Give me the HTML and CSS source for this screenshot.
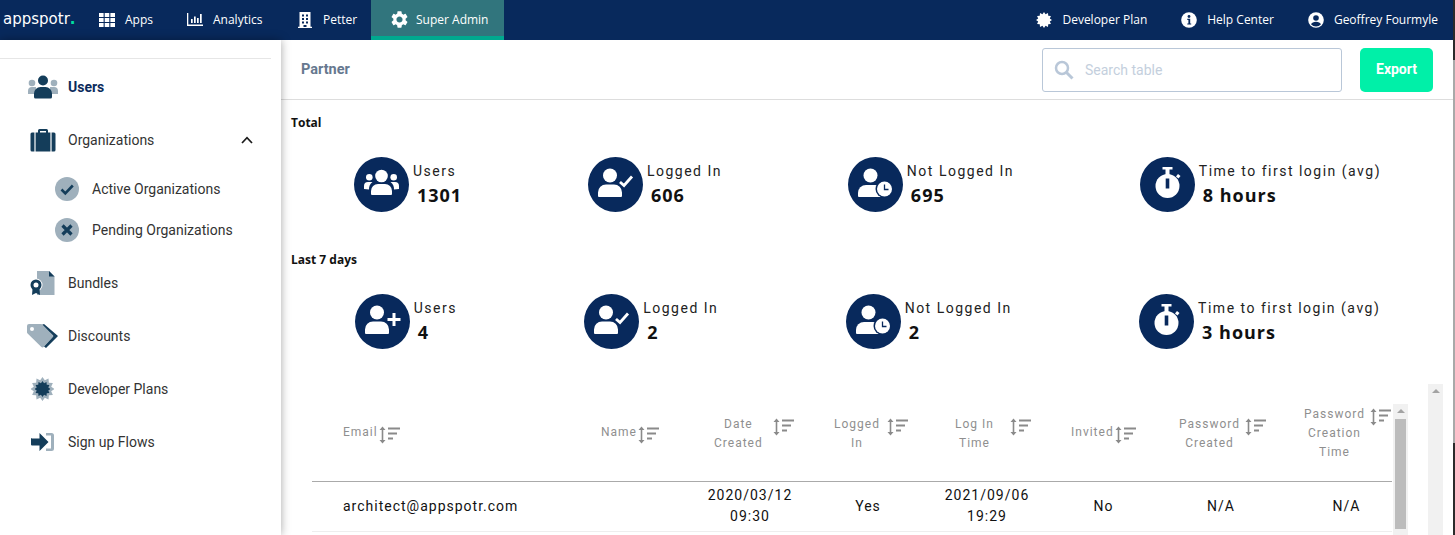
FILE: index.html
```html
<!DOCTYPE html>
<html lang="en">
<head>
    <meta charset="UTF-8">
    <meta name="viewport" content="width=device-width, initial-scale=1.0">
    <title>Super Admin - Partner</title>
    <link rel="stylesheet" href="styles.css">
</head>
<body>
    <svg class="icon-defs" width="0" height="0">
        <symbol id="person-check" viewBox="0 0 55 55">
            <circle cx="27.5" cy="27.5" r="27.5" fill="#08295c"/>
            <circle cx="22" cy="18.5" r="7" fill="#fff"/>
            <path d="M10 39v-3.500a8 8 0 0 1 8-8h8a8 8 0 0 1 8 8v3.500a1 1 0 0 1-1 1H11a1 1 0 0 1-1-1z" fill="#fff"/>
            <path d="M32 25l4 3.500 8-9" fill="none" stroke="#fff" stroke-width="2.800"/>
        </symbol>
        <symbol id="person-plus" viewBox="0 0 55 55">
            <circle cx="27.500" cy="27.500" r="27.500" fill="#08295c"/>
            <circle cx="22" cy="18.500" r="7" fill="#fff"/>
            <path d="M10 39v-3.500a8 8 0 0 1 8-8h8a8 8 0 0 1 8 8v3.500a1 1 0 0 1-1 1H11a1 1 0 0 1-1-1z" fill="#fff"/>
            <path d="M39 19v13M32.500 25.500h13" stroke="#fff" stroke-width="3"/>
        </symbol>
        <symbol id="person-clock" viewBox="0 0 55 55">
            <circle cx="27.500" cy="27.500" r="27.500" fill="#08295c"/>
            <circle cx="22.500" cy="18.500" r="7" fill="#fff"/>
            <path d="M10 39v-3a8 8 0 0 1 8-8h9a8 8 0 0 1 8 8v3a1 1 0 0 1-1 1H11a1 1 0 0 1-1-1z" fill="#fff"/>
            <circle cx="36.500" cy="32" r="9" fill="#08295c"/>
            <circle cx="36.500" cy="32" r="7.500" fill="#fff"/>
            <path d="M36.500 27.500v5h4" fill="none" stroke="#08295c" stroke-width="1.300"/>
        </symbol>
        <symbol id="group" viewBox="0 0 55 55">
            <circle cx="27.500" cy="27.500" r="27.500" fill="#08295c"/>
            <circle cx="27.500" cy="19" r="6.300" fill="#fff"/>
            <circle cx="15.300" cy="20.300" r="3.300" fill="#fff"/>
            <circle cx="39.700" cy="20.300" r="3.300" fill="#fff"/>
            <path d="M17 37v-3a7 7 0 0 1 7-7h7a7 7 0 0 1 7 7v3a1 1 0 0 1-1 1H18a1 1 0 0 1-1-1z" fill="#fff"/>
            <path d="M10 32v-3a4 4 0 0 1 4-4h4.500a9 9 0 0 0-3.500 7.500z" fill="#fff"/>
            <path d="M45 32v-3a4 4 0 0 0-4-4h-4.500a9 9 0 0 1 3.500 7.500z" fill="#fff"/>
        </symbol>
        <symbol id="stopwatch" viewBox="0 0 55 55">
            <circle cx="27.500" cy="27.500" r="27.500" fill="#08295c"/>
            <circle cx="27.500" cy="29" r="12" fill="#fff"/>
            <path d="M22.500 10h10v2.500h-3v6h-4v-6h-3z" fill="#fff"/>
            <path d="M36 19.500l2-2.500 2.500 2-2 2.500z" fill="#fff"/>
            <rect x="25.700" y="21.500" width="3.600" height="10" fill="#08295c"/>
        </symbol>
        <symbol id="sort" viewBox="0 0 21 18">
            <path d="M3.500 2.500v13" stroke="#8a8a8a" stroke-width="1.600"/>
            <path d="M0.500 4L3.500 0.500 6.500 4zM0.500 14L3.500 17.500 6.500 14z" fill="#8a8a8a"/>
            <path d="M9 2.500h12M9 7.500h9M9 12.500h5" stroke="#8a8a8a" stroke-width="1.800"/>
        </symbol>
        <symbol id="burst" viewBox="3.500 0 24 24">
            <polygon points="27.500,12 24.190,14.330 25.890,18 21.860,18.360 21.500,22.390 17.830,20.690 15.500,24 13.170,20.690 9.500,22.390 9.140,18.360 5.110,18 6.810,14.330 3.500,12 6.810,9.670 5.110,6 9.140,5.640 9.500,1.610 13.170,3.310 15.500,0 17.830,3.310 21.500,1.610 21.860,5.640 25.890,6 24.190,9.670"/>
        </symbol>
    </svg>

    <div class="page">
        <header class="topbar">
            <div class="logo">appspotr<span class="logo-dot">.</span></div>
            <nav class="topbar-left">
                <a class="top-link link-apps">
                    <svg class="top-icon" viewBox="0 0 16 14" width="16" height="14" fill="#fff">
                        <rect x="0" y="0" width="4.600" height="4"/><rect x="5.700" y="0" width="4.600" height="4"/><rect x="11.400" y="0" width="4.600" height="4"/>
                        <rect x="0" y="5" width="4.600" height="4"/><rect x="5.700" y="5" width="4.600" height="4"/><rect x="11.400" y="5" width="4.600" height="4"/>
                        <rect x="0" y="10" width="4.600" height="4"/><rect x="5.700" y="10" width="4.600" height="4"/><rect x="11.400" y="10" width="4.600" height="4"/>
                    </svg>
                    Apps
                </a>
                <a class="top-link link-analytics">
                    <svg class="top-icon" viewBox="0 0 16 13" width="16" height="13" fill="#fff">
                        <path d="M0 0h1.300v11.500H16V13H0z"/>
                        <rect x="4" y="6" width="1.700" height="4"/><rect x="7" y="3.500" width="1.700" height="6.500"/><rect x="10" y="5" width="1.700" height="5"/><rect x="13" y="1" width="1.700" height="9"/>
                    </svg>
                    Analytics
                </a>
                <a class="top-link link-petter">
                    <svg class="top-icon" viewBox="0 0 14 16" width="14" height="16">
                        <path d="M1.500 0h11v14.800H14V16H0v-1.200h1.500z" fill="#fff"/>
                        <path d="M4 2.500h2v2H4zM8 2.500h2v2H8zM4 6h2v2H4zM8 6h2v2H8zM4 9.500h2v2H4zM8 9.500h2v2H8zM5.500 13h3v2h-3z" fill="#08295c"/>
                    </svg>
                    Petter
                </a>
                <a class="top-link link-admin active">
                    <svg class="top-icon" viewBox="2 2 20 20" width="17" height="17" fill="#fff">
                        <path d="M19.140 12.940c.04-.3.06-.61.06-.94 0-.32-.02-.64-.07-.94l2.030-1.580a.49.49 0 0 0 .12-.61l-1.920-3.320a.488.488 0 0 0-.59-.22l-2.390.96c-.5-.38-1.030-.7-1.620-.94l-.36-2.540a.484.484 0 0 0-.48-.41h-3.840c-.24 0-.43.17-.47.41l-.36 2.540c-.59.24-1.130.57-1.620.94l-2.390-.96c-.22-.08-.47 0-.59.22L2.740 8.870c-.12.21-.08.47.12.61l2.030 1.580c-.05.3-.09.63-.09.94s.02.64.07.94l-2.030 1.580a.49.49 0 0 0-.12.61l1.920 3.320c.12.22.37.29.59.22l2.390-.96c.5.38 1.030.7 1.620.94l.36 2.540c.05.24.24.41.48.41h3.840c.24 0 .44-.17.47-.41l.36-2.540c.59-.24 1.130-.56 1.620-.94l2.390.96c.22.08.47 0 .59-.22l1.920-3.320c.12-.22.07-.47-.12-.61l-2.010-1.580zM12 15.600c-1.980 0-3.600-1.620-3.600-3.600s1.620-3.600 3.600-3.600 3.600 1.620 3.600 3.600-1.620 3.600-3.600 3.600z"/>
                    </svg>
                    Super Admin
                </a>
            </nav>
            <nav class="topbar-right">
                <a class="top-link">
                    <svg class="top-icon badge-icon" width="16" height="16"><use href="#burst"/></svg>
                    Developer Plan
                </a>
                <a class="top-link">
                    <svg class="top-icon" viewBox="0 0 16 16" width="16" height="16">
                        <circle cx="8" cy="8" r="7.800" fill="#fff"/>
                        <circle cx="8" cy="4.500" r="1.400" fill="#08295c"/>
                        <path d="M6.300 6.800h2.900v4.700h1v1.100H6.300v-1.100h1.100V7.900H6.300z" fill="#08295c"/>
                    </svg>
                    Help Center
                </a>
                <a class="top-link">
                    <svg class="top-icon" viewBox="0 0 16 16" width="16" height="16">
                        <circle cx="8" cy="8" r="7.800" fill="#fff"/>
                        <circle cx="8" cy="6" r="2.800" fill="#08295c"/>
                        <path d="M3 12.300c.8-1.800 2.600-2.600 5-2.600s4.200.8 5 2.600a6.600 6.600 0 0 1-10 0z" fill="#08295c"/>
                    </svg>
                    Geoffrey Fourmyle
                </a>
            </nav>
        </header>

        <div class="layout">
            <aside class="sidebar">
                <div class="sidebar-top"></div>
                <ul class="side-menu">
                    <li class="side-item selected">
                        <svg class="side-icon" viewBox="0 0 32 24" width="32" height="24">
                            <circle cx="5" cy="8" r="3.300" fill="#9fb0bc"/>
                            <circle cx="27" cy="8" r="3.300" fill="#9fb0bc"/>
                            <path d="M1 19v-3a4 4 0 0 1 4-4h4v7zM31 19v-3a4 4 0 0 0-4-4h-4v7z" fill="#9fb0bc"/>
                            <circle cx="16" cy="5.500" r="5" fill="#143d5a"/>
                            <path d="M7 22v-3.500a6.500 6.500 0 0 1 6.500-6.500h5a6.500 6.500 0 0 1 6.500 6.500V22a1.500 1.500 0 0 1-1.500 1.500h-15A1.500 1.500 0 0 1 7 22z" fill="#143d5a"/>
                        </svg>
                        Users
                    </li>
                    <li class="side-item">
                        <svg class="side-icon" viewBox="0 0 32 24" width="32" height="24">
                            <path d="M11 5V2.500A1.500 1.500 0 0 1 12.500 1h7A1.500 1.500 0 0 1 21 2.500V5h-2V3h-6v2z" fill="#143d5a"/>
                            <rect x="9" y="4.500" width="14" height="19" fill="#143d5a"/>
                            <path d="M5 4.500h2v19H5a1.500 1.500 0 0 1-1.500-1.500V6A1.500 1.500 0 0 1 5 4.500zM27 4.500h-2v19h2a1.500 1.500 0 0 0 1.500-1.500V6A1.500 1.500 0 0 0 27 4.500z" fill="#143d5a"/>
                            <path d="M7 4.500h2v19H7zM23 4.500h2v19h-2z" fill="#9fb0bc"/>
                        </svg>
                        <span class="side-label">Organizations</span>
                        <svg class="chevron" viewBox="0 0 12 8" width="12" height="8">
                            <path d="M1 7l5-5.300L11 7" fill="none" stroke="#1a1a1a" stroke-width="1.700"/>
                        </svg>
                    </li>
                    <li class="side-sub">
                        <div class="sub-item">
                            <svg viewBox="0 0 24 24" width="24" height="24">
                                <circle cx="12" cy="12" r="12" fill="#9fb0bc"/>
                                <path d="M6.500 12.500l3.800 3.800 7.500-7.800" fill="none" stroke="#143d5a" stroke-width="2.600"/>
                            </svg>
                            Active Organizations
                        </div>
                        <div class="sub-item">
                            <svg viewBox="0 0 24 24" width="24" height="24">
                                <circle cx="12" cy="12" r="12" fill="#9fb0bc"/>
                                <path d="M7.500 7.500l9 9M16.500 7.500l-9 9" fill="none" stroke="#143d5a" stroke-width="3.200"/>
                            </svg>
                            Pending Organizations
                        </div>
                    </li>
                    <li class="side-item">
                        <svg class="side-icon" viewBox="0 0 32 24" width="32" height="24">
                            <path d="M10 0h12l5.500 5.500V24H10z" fill="#9fb0bc"/>
                            <path d="M22 0l5.500 5.500H22z" fill="#143d5a"/>
                            <circle cx="9" cy="14" r="6.500" fill="#fff"/>
                            <circle cx="9" cy="14" r="4" fill="none" stroke="#143d5a" stroke-width="3"/>
                            <path d="M5.500 18l-.5 6 4-2 4 2-.5-6z" fill="#143d5a"/>
                        </svg>
                        Bundles
                    </li>
                    <li class="side-item">
                        <svg class="side-icon" viewBox="0 0 32 24" width="32" height="24">
                            <path d="M17 0l14 12-12 12-2.200-1.800L26.500 12 14.500 1z" fill="#143d5a"/>
                            <path d="M2 0h12a2 2 0 0 1 1.400.6l10 10.100a2 2 0 0 1 0 2.800l-8.500 9.200a2 2 0 0 1-2.800 0L.6 9.500A2 2 0 0 1 0 8V2a2 2 0 0 1 2-2z" fill="#9fb0bc"/>
                            <circle cx="5" cy="5" r="2" fill="#fff"/>
                        </svg>
                        Discounts
                    </li>
                    <li class="side-item">
                        <svg class="side-icon" viewBox="0 0 32 24" width="32" height="24">
                            <svg x="3.500" y="0" width="24" height="24" fill="#9fb0bc"><use href="#burst"/></svg>
                            <svg x="7.500" y="4" width="16" height="16" fill="#143d5a"><use href="#burst"/></svg>
                        </svg>
                        Developer Plans
                    </li>
                    <li class="side-item">
                        <svg class="side-icon" viewBox="0 0 32 24" width="32" height="24">
                            <path d="M19 3h5.500A2.500 2.500 0 0 1 27 5.500v13a2.500 2.500 0 0 1-2.500 2.500H19v-2.500h5v-13h-5z" fill="#9fb0bc"/>
                            <path d="M5 8.500h7.500V3l9 9-9 9v-5.500H5a1 1 0 0 1-1-1v-5.500a1 1 0 0 1 1-1z" fill="#143d5a"/>
                        </svg>
                        Sign up Flows
                    </li>
                </ul>
            </aside>

            <main class="content">
                <div class="toolbar">
                    <div class="toolbar-title">Partner</div>
                    <div class="search-box">
                        <svg viewBox="0 0 20 20" width="20" height="20">
                            <circle cx="8" cy="8" r="6" fill="none" stroke="#b9c7d8" stroke-width="2.500"/>
                            <path d="M12.500 12.500l6 6" stroke="#b9c7d8" stroke-width="3"/>
                        </svg>
                        <span class="search-placeholder">Search table</span>
                    </div>
                    <button class="export-btn">Export</button>
                </div>

                <section class="stats-block">
                    <h3 class="stats-heading">Total</h3>
                    <div class="stats-row">
                        <div class="stat">
                            <svg class="stat-icon"><use href="#group"/></svg>
                            <div><div class="stat-label">Users</div><div class="stat-value">1301</div></div>
                        </div>
                        <div class="stat">
                            <svg class="stat-icon"><use href="#person-check"/></svg>
                            <div><div class="stat-label">Logged In</div><div class="stat-value">606</div></div>
                        </div>
                        <div class="stat">
                            <svg class="stat-icon"><use href="#person-clock"/></svg>
                            <div><div class="stat-label">Not Logged In</div><div class="stat-value">695</div></div>
                        </div>
                        <div class="stat">
                            <svg class="stat-icon"><use href="#stopwatch"/></svg>
                            <div><div class="stat-label">Time to first login (avg)</div><div class="stat-value">8 hours</div></div>
                        </div>
                    </div>
                </section>

                <section class="stats-block">
                    <h3 class="stats-heading">Last 7 days</h3>
                    <div class="stats-row">
                        <div class="stat">
                            <svg class="stat-icon"><use href="#person-plus"/></svg>
                            <div><div class="stat-label">Users</div><div class="stat-value">4</div></div>
                        </div>
                        <div class="stat">
                            <svg class="stat-icon"><use href="#person-check"/></svg>
                            <div><div class="stat-label">Logged In</div><div class="stat-value">2</div></div>
                        </div>
                        <div class="stat">
                            <svg class="stat-icon"><use href="#person-clock"/></svg>
                            <div><div class="stat-label">Not Logged In</div><div class="stat-value">2</div></div>
                        </div>
                        <div class="stat">
                            <svg class="stat-icon"><use href="#stopwatch"/></svg>
                            <div><div class="stat-label">Time to first login (avg)</div><div class="stat-value">3 hours</div></div>
                        </div>
                    </div>
                </section>

                <div class="table-area">
                    <div class="table-wrap">
                        <table class="user-table">
                            <thead>
                                <tr>
                                    <th class="col-email"><div class="head-cell"><span>Email</span><svg class="sort-icon"><use href="#sort"/></svg></div></th>
                                    <th class="col-name"><div class="head-cell"><span>Name</span><svg class="sort-icon"><use href="#sort"/></svg></div></th>
                                    <th class="col-date"><div class="head-cell"><span>Date<br>Created</span><svg class="sort-icon"><use href="#sort"/></svg></div></th>
                                    <th class="col-logged"><div class="head-cell"><span>Logged<br>In</span><svg class="sort-icon"><use href="#sort"/></svg></div></th>
                                    <th class="col-login"><div class="head-cell"><span>Log In<br>Time</span><svg class="sort-icon"><use href="#sort"/></svg></div></th>
                                    <th class="col-invited"><div class="head-cell"><span>Invited</span><svg class="sort-icon"><use href="#sort"/></svg></div></th>
                                    <th class="col-pass"><div class="head-cell"><span>Password<br>Created</span><svg class="sort-icon"><use href="#sort"/></svg></div></th>
                                    <th class="col-passtime"><div class="head-cell"><span>Password<br>Creation<br>Time</span><svg class="sort-icon"><use href="#sort"/></svg></div></th>
                                </tr>
                            </thead>
                            <tbody>
                                <tr>
                                    <td class="cell-email">architect@appspotr.com</td>
                                    <td></td>
                                    <td>2020/03/12<br>09:30</td>
                                    <td>Yes</td>
                                    <td>2021/09/06<br>19:29</td>
                                    <td>No</td>
                                    <td>N/A</td>
                                    <td class="cell-last">N/A</td>
                                </tr>
                            </tbody>
                        </table>
                    </div>
                    <div class="fake-scroll inner-scroll">
                        <div class="scroll-arrow"></div>
                        <div class="scroll-thumb"></div>
                    </div>
                    <div class="fake-scroll outer-scroll">
                        <div class="scroll-arrow"></div>
                    </div>
                </div>
            </main>
        </div>
    </div>
</body>
</html>
```

FILE: styles.css
```css
html, body {
    height: 100%;
}

body {
    margin: 0;
    overflow: hidden;
    background: linear-gradient(#2b2b2b 0, #2b2b2b 60px, #a9a9a9 60px, #a9a9a9 443px, #2b2b2b 443px);
    font-family: "Roboto", sans-serif;
    color: #111;
}

.icon-defs {
    position: absolute;
}

.page {
    width: 1453px;
    height: 535px;
    background-color: #fff;
    overflow: hidden;
}

/* top bar */
.topbar {
    display: flex;
    align-items: stretch;
    height: 40px;
    background-color: #08295c;
    color: #fff;
    font-family: "Open Sans", sans-serif;
    font-size: 12px;
    line-height: 14px;
}

.logo {
    width: 99px;
    padding-left: 3px;
    box-sizing: border-box;
    line-height: 38px;
    font-family: "DejaVu Sans", sans-serif;
    font-size: 15px;
    font-weight: 500;
}

.logo-dot {
    color: #00e0a0;
    font-weight: bold;
}

.topbar-left {
    display: flex;
}

.topbar-right {
    display: flex;
    margin-left: auto;
    padding-right: 15px;
    gap: 34px;
}

.top-link {
    display: flex;
    align-items: center;
    gap: 10px;
    padding-bottom: 1px;
    white-space: nowrap;
}

.link-apps {
    width: 88px;
}

.link-analytics {
    width: 111px;
}

.link-petter {
    width: 73px;
    gap: 11px;
}

.link-admin {
    box-sizing: border-box;
    width: 133px;
    padding-left: 20px;
    gap: 8px;
}

.active {
    background-color: #31757d;
    border-bottom: 4px solid #00a98f;
    padding-top: 3px;
    padding-bottom: 0;
}

.top-icon {
    flex-shrink: 0;
}

.badge-icon {
    fill: #fff;
}

/* sidebar + content */
.layout {
    display: flex;
    height: 495px;
}

.sidebar {
    width: 281px;
    flex-shrink: 0;
    background-color: #fff;
    box-shadow: 0 0 9px rgba(0, 0, 0, 0.35);
    position: relative;
    z-index: 1;
    font-size: 14px;
    color: #333;
}

.sidebar-top {
    height: 18px;
    width: 271px;
    border-bottom: 1px solid #e6e6e6;
}

.side-menu {
    list-style: none;
    margin: 0;
    padding: 1px 0 0;
}

.side-item {
    display: flex;
    align-items: center;
    height: 53px;
    padding-left: 27px;
    gap: 9px;
}

.selected {
    font-weight: bold;
    color: #0b2b5c;
}

.side-label {
    flex: 1;
}

.chevron {
    margin-right: 28px;
}

.side-sub {
    padding: 2px 0 6px 55px;
}

.sub-item {
    display: flex;
    align-items: center;
    height: 41px;
    gap: 13px;
}

/* toolbar */
.content {
    flex: 1;
    min-width: 0;
}

.toolbar {
    display: flex;
    align-items: center;
    height: 59px;
    border-bottom: 1px solid #ddd;
    padding: 0 20px 0 20px;
}

.toolbar-title {
    flex: 1;
    font-size: 14.5px;
    font-weight: bold;
    color: #66788f;
}

.search-box {
    display: flex;
    align-items: center;
    box-sizing: border-box;
    width: 300px;
    height: 44px;
    padding-left: 11px;
    gap: 11px;
    border: 1px solid #b9c7d8;
    border-radius: 3px;
}

.search-placeholder {
    font-size: 14px;
    color: #c4cfdd;
}

.export-btn {
    box-sizing: border-box;
    width: 73px;
    height: 44px;
    margin-left: 18px;
    padding-bottom: 3px;
    border: none;
    border-radius: 5px;
    background-color: #00f0a8;
    color: #fff;
    font-family: "Roboto", sans-serif;
    font-size: 14px;
    font-weight: bold;
}

/* stat rows */
.stats-block {
    padding: 0 9px 0 10px;
}

.stats-heading {
    margin: 0;
    padding-top: 14px;
    height: 17px;
    line-height: 17px;
    font-family: "Open Sans", sans-serif;
    font-size: 12px;
    font-weight: bold;
    color: #111;
}

.stats-row {
    display: flex;
    justify-content: space-around;
    margin-top: 26px;
    height: 80px;
}

.stat {
    display: flex;
    gap: 4px;
}

.stat-icon {
    width: 55px;
    height: 55px;
    flex-shrink: 0;
}

.stat-label {
    font-size: 14px;
    line-height: 28px;
    letter-spacing: 1.5px;
    color: #222;
}

.stat-value {
    padding-left: 4px;
    font-family: "Open Sans", sans-serif;
    font-size: 18px;
    font-weight: bold;
    line-height: 20px;
    letter-spacing: 1px;
    color: #111;
}

/* table */
.table-area {
    display: flex;
    align-items: flex-start;
    padding-left: 31px;
    margin-top: 10px;
}

.table-wrap {
    width: 1080px;
    margin-top: 20px;
    flex-shrink: 0;
}

.user-table {
    width: 1080px;
    table-layout: fixed;
    border-collapse: collapse;
}

.user-table th {
    box-sizing: border-box;
    padding: 1px 0 19px;
    vertical-align: middle;
    text-align: left;
    border-bottom: 1px solid #aaa;
    font-size: 12px;
    font-weight: normal;
    line-height: 19px;
    letter-spacing: 1px;
    color: #8f8f8f;
}

.head-cell {
    display: flex;
    align-items: flex-start;
}

.head-cell span {
    text-align: center;
}

.sort-icon {
    width: 21px;
    height: 18px;
    flex-shrink: 0;
    margin-top: 3px;
}

.user-table .col-email { width: 258px; padding-left: 31px; }
.col-email .sort-icon { margin-left: 1px; }
.user-table .col-name { width: 122px; padding-left: 31px; }
.col-name .sort-icon { margin-left: 1px; }
.user-table .col-date { width: 116px; padding-left: 22px; }
.col-date .sort-icon { margin-left: 10px; }
.user-table .col-logged { width: 120px; padding-left: 26px; }
.col-logged .sort-icon { margin-left: 7px; }
.user-table .col-login { width: 118px; padding-left: 27px; }
.col-login .sort-icon { margin-left: 16px; }
.user-table .col-invited { width: 115px; padding-left: 25px; }
.col-invited .sort-icon { margin-left: 1px; }
.user-table .col-pass { width: 120px; padding-left: 18px; }
.col-pass .sort-icon { margin-left: 5px; }
.user-table .col-passtime { width: 111px; padding-left: 23px; }
.col-passtime .sort-icon { margin-left: 5px; }

.user-table td {
    padding: 3px 0 4px;
    text-align: center;
    border-bottom: 1px solid #eee;
    font-size: 14px;
    line-height: 21px;
    letter-spacing: 1px;
    color: #111;
}

.user-table .cell-email {
    padding-left: 31px;
    text-align: left;
}

.user-table .cell-last {
    padding-left: 20px;
}

.fake-scroll {
    flex-shrink: 0;
    box-sizing: border-box;
    width: 15px;
    height: 200px;
    padding: 0 2px;
    background-color: #f1f1f1;
}

.inner-scroll {
    margin: 20px 0 0 1px;
}

.outer-scroll {
    margin-left: 20px;
}

.scroll-arrow {
    width: 0;
    height: 0;
    margin: 5px auto 6px;
    border-left: 4px solid transparent;
    border-right: 4px solid transparent;
    border-bottom: 4px solid #a3a3a3;
}

.scroll-thumb {
    height: 110px;
    background-color: #bcbcbc;
}
```
